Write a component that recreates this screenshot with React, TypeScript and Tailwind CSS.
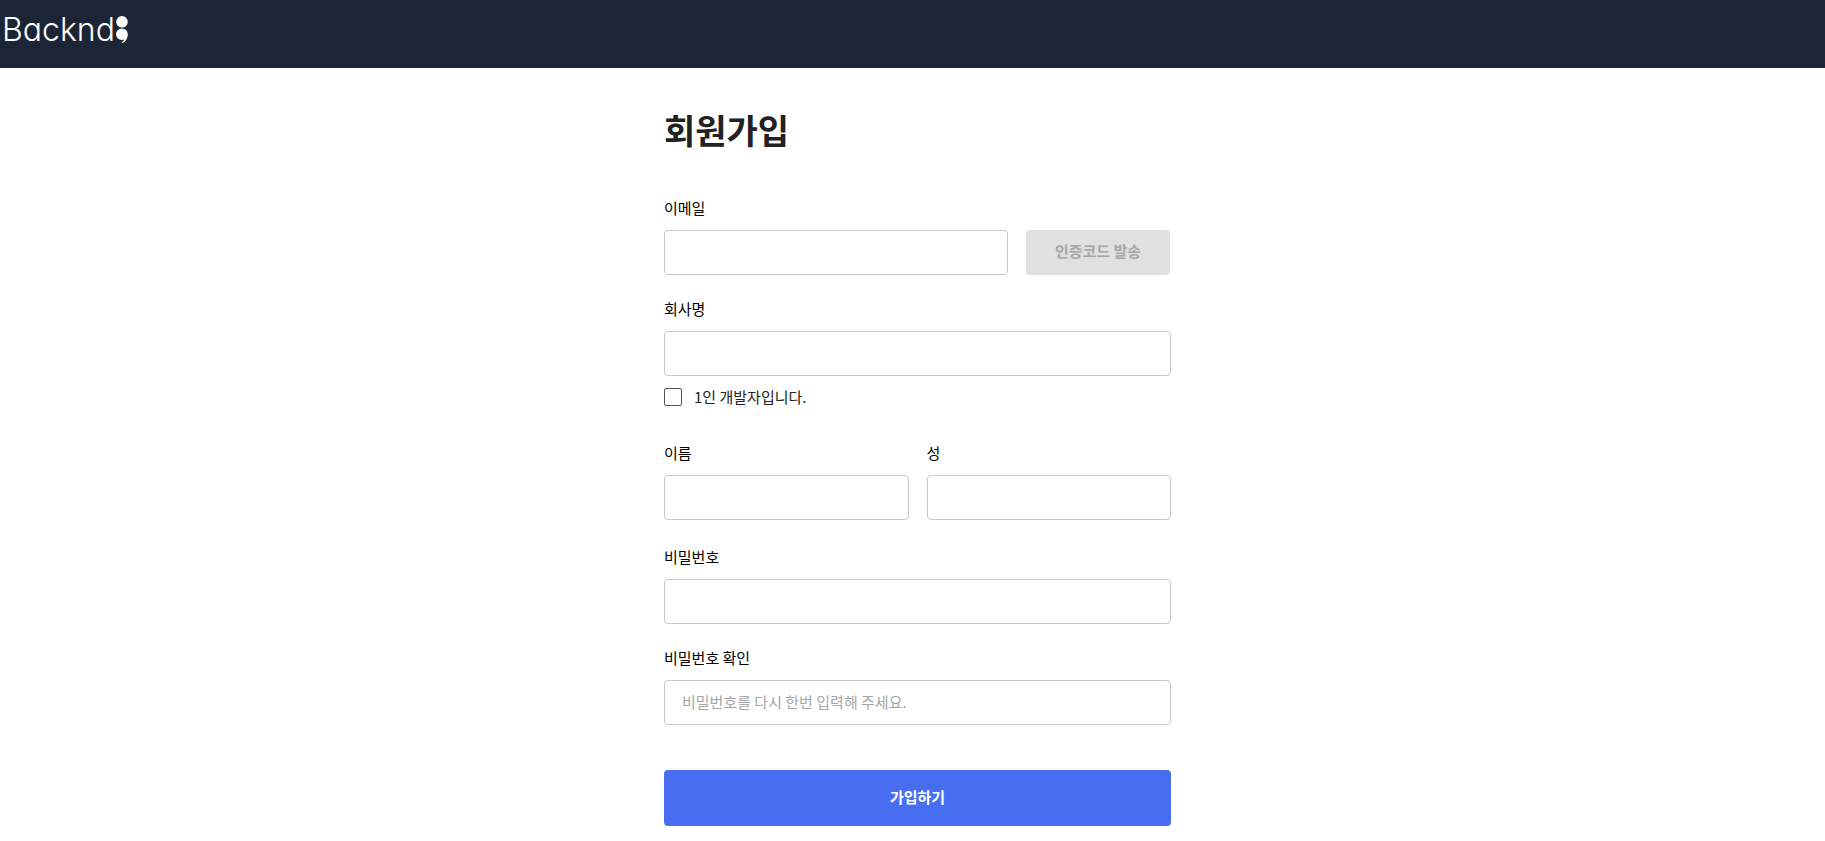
import type { InputHTMLAttributes } from "react";

type FieldProps = InputHTMLAttributes<HTMLInputElement> & {
  id: string;
  label: string;
};

function Field({ id, label, className = "", ...rest }: FieldProps) {
  return (
    <div className={`flex flex-col gap-[11px] ${className}`}>
      <label htmlFor={id} className="text-[15px] leading-[22px] text-black">
        {label}
      </label>
      <input
        id={id}
        className="h-[45px] w-full rounded-[4px] border border-[#c8c8c8] bg-white px-[17px] pb-0.5 text-[15px] text-[#222222] outline-none placeholder:text-[#a6a6a6] focus:border-[#476ef1]"
        {...rest}
      />
    </div>
  );
}

function Logo() {
  return (
    <a href="/" aria-label="Backnd" className="inline-flex items-start gap-px">
      <span className="font-['Inter'] text-[32px] leading-[28px] font-light text-white [font-feature-settings:'cv11']">
        Backnd
      </span>
      <svg width="12" height="28" viewBox="0 0 12 28" fill="white" aria-hidden="true">
        <circle cx="6" cy="5.8" r="5.8" />
        <path d="M6 12.4A5.8 5.8 0 0 1 11.8 18.2C11.8 22 9.8 25.6 6.200 27.300L5.600 26.500C7 25.700 7.800 24.800 8 23.600A5.800 5.800 0 1 1 6 12.400Z" />
      </svg>
    </a>
  );
}

export default function App() {
  return (
    <div className="min-h-screen bg-white font-['Noto_Sans_CJK_KR',sans-serif]">
      <header className="flex h-[68px] items-start bg-[#1c2536] px-[2px] pt-4">
        <Logo />
      </header>

      <main className="pt-9 pb-[14px] pl-[10px]">
        <form className="mx-auto flex w-full max-w-[507px] flex-col">
          <h1 className="text-[34px] leading-[52px] font-bold text-[#222222]">회원가입</h1>

          <div className="mt-[41px] flex items-end gap-[18px] pr-px">
            <Field id="email" label="이메일" type="email" className="flex-1" />
            <button
              type="button"
              disabled
              className="h-[45px] w-36 rounded-[4px] bg-[#e0e0e0] pb-0.5 text-[15px] font-bold text-[#a6a6a6]"
            >
              인증코드 발송
            </button>
          </div>

          <Field id="company" label="회사명" type="text" className="mt-[23px]" />
          <label className="mt-3 flex items-center gap-3 text-[15px] leading-[18px] text-[#222222]">
            <input
              type="checkbox"
              className="size-[18px] appearance-none rounded-[2px] border border-[#555555] bg-white checked:bg-[#476ef1]"
            />
            1인 개발자입니다.
          </label>

          <div className="mt-9 grid grid-cols-2 gap-[18px]">
            <Field id="firstName" label="이름" type="text" />
            <Field id="lastName" label="성" type="text" />
          </div>

          <Field id="password" label="비밀번호" type="password" className="mt-[26px]" />
          <Field
            id="passwordConfirm"
            label="비밀번호 확인"
            type="password"
            placeholder="비밀번호를 다시 한번 입력해 주세요."
            className="mt-[23px]"
          />

          <button
            type="submit"
            className="mt-[45px] h-14 rounded-[4px] bg-[#476ef1] pb-0.5 text-[15px] font-bold text-white"
          >
            가입하기
          </button>
        </form>
      </main>
    </div>
  );
}
